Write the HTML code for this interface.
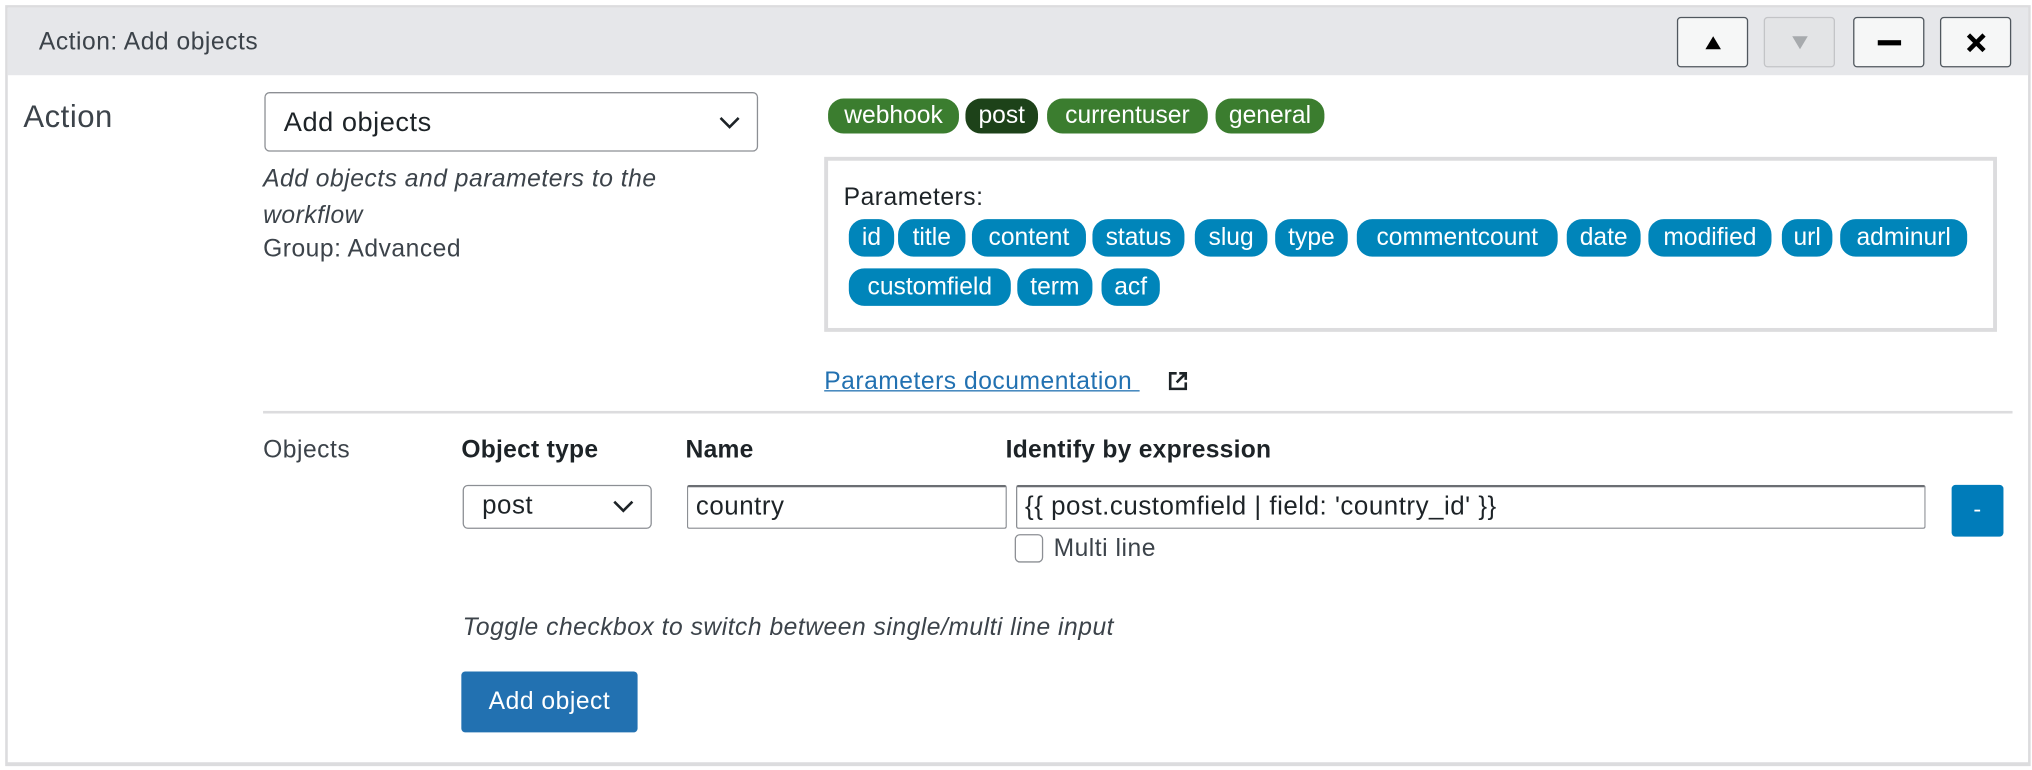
<!DOCTYPE html>
<html><head><meta charset="utf-8"><style>
*{box-sizing:border-box;margin:0;padding:0}
html,body{width:2032px;height:770px;overflow:hidden;background:#fff}
#w{position:absolute;left:0;top:0;width:1568px;height:594px;transform:scale(1.2959,1.2963);transform-origin:0 0;font-family:"Liberation Sans",sans-serif;color:#3c434a;letter-spacing:0.4px}
.a{position:absolute;white-space:nowrap}
.btn{position:absolute;top:13px;width:55px;height:39px;border:1px solid #50575e;border-radius:3px;background:#f6f7f7;display:flex;align-items:center;justify-content:center}
.tag{position:absolute;top:76px;height:27px;border-radius:12px;background:#3b7d2f;color:#fff;font-size:19px;line-height:27px;text-align:center;letter-spacing:0}
.p{position:absolute;height:29px;border-radius:12px;background:#0085ba;color:#fff;font-size:19px;line-height:29px;text-align:center;letter-spacing:0}
.in{position:absolute;top:374px;height:34px;border:1px solid #8c8f94;border-top:2px solid #6b6e73;border-radius:2px;background:#fff;font-size:20px;line-height:31px;padding-left:6px;color:#1d2327}
</style></head><body><div id="w">
<div class="a" style="left:4px;top:4px;width:1563px;height:587px;border:2px solid #dcdcde;border-bottom:3px solid #dcdcde"></div>
<div class="a" style="left:6px;top:6px;width:1559px;height:52px;background:#e6e7ea"></div>
<div class="a" style="left:30px;top:22px;font-size:19px;color:#3c434a">Action: Add objects</div>
<div class="btn" style="left:1294px"><svg width="14" height="12"><path d="M7 1L13 11H1Z" fill="#000"/></svg></div>
<div class="btn" style="left:1361px;background:#e3e4e6;border-color:#c3c4c7"><svg width="14" height="12"><path d="M1 1H13L7 11Z" fill="#a7aaad"/></svg></div>
<div class="btn" style="left:1430px"><div style="width:18px;height:4px;background:#000"></div></div>
<div class="btn" style="left:1497px"><svg width="18" height="18"><path d="M3 3L15 15M15 3L3 15" stroke="#000" stroke-width="3.5"/></svg></div>

<div class="a" style="left:18px;top:77px;font-size:24px;color:#3c434a">Action</div>
<div class="a" style="left:204px;top:71px;width:381px;height:46px;border:1px solid #8c8f94;border-radius:4px;font-size:21px;line-height:46px;padding-left:14px;color:#1d2327">Add objects
<svg style="position:absolute;right:13px;top:18px" width="16" height="10"><path d="M1 1L8 8L15 1" stroke="#1d2327" stroke-width="2" fill="none"/></svg></div>
<div class="a" style="left:203px;top:125px;font-size:19px;font-style:italic;line-height:28px;color:#3c434a">Add objects and parameters to the<br>workflow</div>
<div class="a" style="left:203px;top:182px;font-size:19px;color:#3c434a">Group: Advanced</div>

<div class="tag" style="left:639px;width:101px">webhook</div>
<div class="tag" style="left:745px;width:56px;background:#1d4219">post</div>
<div class="tag" style="left:808px;width:124px">currentuser</div>
<div class="tag" style="left:938px;width:84px">general</div>

<div class="a" style="left:636px;top:121px;width:905px;height:135px;border:3px solid #dcdcde"></div>
<div class="a" style="left:651px;top:142px;font-size:19px;color:#1d2327">Parameters:</div>
<div class="p" style="top:169px;left:655px;width:35px">id</div>
<div class="p" style="top:169px;left:693px;width:52px">title</div>
<div class="p" style="top:169px;left:750px;width:88px">content</div>
<div class="p" style="top:169px;left:843px;width:71px">status</div>
<div class="p" style="top:169px;left:922px;width:56px">slug</div>
<div class="p" style="top:169px;left:984px;width:56px">type</div>
<div class="p" style="top:169px;left:1047px;width:155px">commentcount</div>
<div class="p" style="top:169px;left:1209px;width:57px">date</div>
<div class="p" style="top:169px;left:1272px;width:95px">modified</div>
<div class="p" style="top:169px;left:1375px;width:39px">url</div>
<div class="p" style="top:169px;left:1420px;width:98px">adminurl</div>
<div class="p" style="top:207px;left:655px;width:125px">customfield</div>
<div class="p" style="top:207px;left:785px;width:58px">term</div>
<div class="p" style="top:207px;left:850px;width:45px">acf</div>

<div class="a" style="left:636px;top:284px;font-size:19px;color:#2271b1;text-decoration:underline">Parameters documentation&nbsp;</div>
<svg class="a" style="left:901px;top:286px" width="16" height="16"><path d="M7 2H2V14H14V9" stroke="#1d2327" stroke-width="2" fill="none"/><path d="M9 2H14V7M14 2L7 9" stroke="#1d2327" stroke-width="2" fill="none"/></svg>
<div class="a" style="left:203px;top:317px;width:1350px;height:2px;background:#dcdcde"></div>

<div class="a" style="left:203px;top:337px;font-size:19px;color:#3c434a">Objects</div>
<div class="a" style="left:356px;top:337px;font-size:19px;font-weight:bold;color:#1d2327;letter-spacing:0.2px">Object type</div>
<div class="a" style="left:529px;top:337px;font-size:19px;font-weight:bold;color:#1d2327;letter-spacing:0.2px">Name</div>
<div class="a" style="left:776px;top:337px;font-size:19px;font-weight:bold;color:#1d2327;letter-spacing:0.2px">Identify by expression</div>

<div class="in" style="left:357px;width:146px;border-radius:4px;border:1px solid #8c8f94;padding-left:14px">post<svg style="position:absolute;right:13px;top:11px" width="16" height="10"><path d="M1 1L8 8L15 1" stroke="#1d2327" stroke-width="2" fill="none"/></svg></div>
<div class="in" style="left:530px;width:247px">country</div>
<div class="in" style="left:784px;width:702px">{{ post.customfield | field: 'country_id' }}</div>
<div class="a" style="left:1506px;top:374px;width:40px;height:40px;background:#007cba;border-radius:3px;color:#fff;font-size:18px;line-height:38px;text-align:center">-</div>
<div class="a" style="left:783px;top:412px;width:22px;height:22px;border:1px solid #8c8f94;border-radius:4px"></div>
<div class="a" style="left:813px;top:413px;font-size:19px;color:#3c434a">Multi line</div>

<div class="a" style="left:357px;top:474px;font-size:19px;font-style:italic;color:#3c434a">Toggle checkbox to switch between single/multi line input</div>
<div class="a" style="left:356px;top:518px;width:136px;height:47px;background:#2271b1;border-radius:3px;color:#fff;font-size:19px;line-height:47px;text-align:center">Add object</div>
</div></body></html>
